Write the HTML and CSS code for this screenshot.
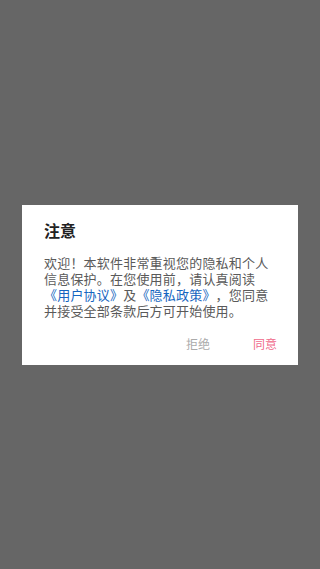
FILE: index.html
```html
<!DOCTYPE html>
<html lang="zh-CN">
<head>
<meta charset="utf-8">
<link rel="stylesheet" href="styles.css">
</head>
<body>
<div class="overlay">
  <div class="dialog">
    <div class="title">注意</div>
    <div class="content">欢迎！本软件非常重视您的隐私和个人信息保护。在您使用前，请认真阅读<span class="link">《用户协议》</span>及<span class="link">《隐私政策》</span>，您同意并接受全部条款后方可开始使用。</div>
    <div class="actions">
      <span class="btn reject">拒绝</span>
      <span class="btn agree">同意</span>
    </div>
  </div>
</div>
</body>
</html>
```
FILE: styles.css
```css
html, body {
  margin: 0;
  padding: 0;
}
body {
  background: #666666;
  font-family: "Noto Sans CJK SC", "Noto Sans", sans-serif;
}
.overlay {
  height: 569px;
  display: flex;
  align-items: center;
  justify-content: center;
  padding: 0 22px;
}
.dialog {
  background: #ffffff;
  width: 276px;
  height: 160px;
  box-sizing: border-box;
  padding: 14px 22px 0 22px;
  display: flex;
  flex-direction: column;
}
.title {
  font-size: 16px;
  font-weight: bold;
  line-height: 22px;
  color: #222222;
}
.content {
  margin-top: 14px;
  font-size: 13px;
  line-height: 16px;
  color: #5a5a5a;
  letter-spacing: 0.2px;
  text-spacing-trim: space-all;
  font-feature-settings: "fwid" 1;
}
.link {
  color: #1565c0;
}
.actions {
  margin-top: 17px;
  display: flex;
  justify-content: flex-end;
  font-size: 12px;
  line-height: 16px;
}
.btn {
  margin-left: 43px;
}
.reject {
  color: #aaaaaa;
}
.agree {
  color: #f06a8c;
  margin-right: -1px;
}
```
